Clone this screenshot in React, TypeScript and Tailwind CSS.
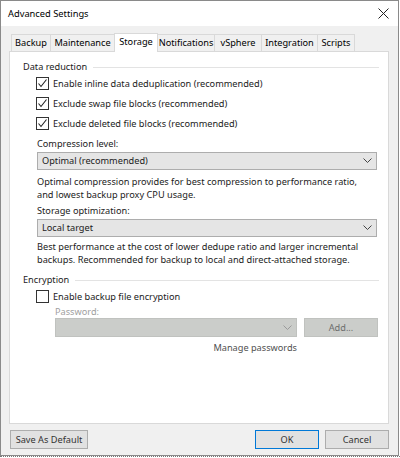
import React from "react";

const Check = ({ checked }: { checked: boolean }) => (
  <div className="w-[13px] h-[13px] border border-[#333333] bg-white flex items-center justify-center shrink-0">
    {checked && (
      <svg width="11" height="11" viewBox="0 0 11 11">
        <polyline points="1.5,5.5 4,8.5 9.5,1.5" fill="none" stroke="#222" strokeWidth="1.1" />
      </svg>
    )}
  </div>
);

const Chevron = ({ color = "#444" }: { color?: string }) => (
  <svg width="9" height="6" viewBox="0 0 9 6">
    <polyline points="0.5,0.5 4.5,4.5 8.5,0.5" fill="none" stroke={color} strokeWidth="1" />
  </svg>
);

const tabs = [
  { name: "Backup", w: "w-[40px]" },
  { name: "Maintenance", w: "w-[65px]" },
  { name: "Storage", w: "w-[44px]", sel: true },
  { name: "Notifications", w: "w-[58px]" },
  { name: "vSphere", w: "w-[48px]" },
  { name: "Integration", w: "w-[57px]" },
  { name: "Scripts", w: "w-[38px]" },
];

export default function App() {
  return (
    <div className="w-[400px] h-[458px] bg-white overflow-hidden font-['Noto_Sans',sans-serif] text-[9.2px] text-[#1b1b1b] whitespace-nowrap">
      <div className="w-[399px] h-[456px] border border-[#8a8a8a] bg-[#f0f0f0] flex flex-col">
        {/* title bar */}
        <div className="h-[25px] bg-white flex items-center justify-between pl-[7px] pr-[8px] shrink-0">
          <span className="text-[9.3px] text-black leading-none mt-[1px]">Advanced Settings</span>
          <svg width="11" height="11" viewBox="0 0 11 11" className="mr-[1px]">
            <line x1="0.5" y1="0.5" x2="10.5" y2="10.5" stroke="#222" strokeWidth="1" />
            <line x1="10.5" y1="0.5" x2="0.5" y2="10.5" stroke="#222" strokeWidth="1" />
          </svg>
        </div>
        {/* body */}
        <div className="flex-1 pl-[8px] pr-[9px] pt-[7px] flex flex-col">
          {/* tabs */}
          <div className="flex items-end h-[18px] pl-[2px] relative z-10">
            {tabs.map((t) =>
              t.sel ? (
                <div
                  key={t.name}
                  className={`${t.w} h-[19px] -ml-px bg-white border border-[#d9d9d9] border-b-0 flex items-center justify-center text-black -mb-[1px] pb-[2px]`}
                >
                  {t.name}
                </div>
              ) : (
                <div
                  key={t.name}
                  className={`${t.w} h-[17px] bg-[#f0f0f0] border border-[#d9d9d9] border-b-0 -ml-px first:ml-0 flex items-center justify-center text-black`}
                >
                  {t.name}
                </div>
              )
            )}
          </div>
          {/* panel */}
          <div className="h-[373px] bg-white border border-[#d9d9d9] pl-[13px] pr-[9px] pt-[8px] flex flex-col">
            {/* data reduction group */}
            <div className="flex items-center h-[14px]">
              <span className="leading-none mr-[6px]">Data reduction</span>
              <div className="flex-1 h-px bg-[#e3e3e3]" />
            </div>
            <div className="pl-[13px] flex flex-col">
              <div className="flex flex-col gap-[7px] mt-[3px]">
                {[
                  "Enable inline data deduplication (recommended)",
                  "Exclude swap file blocks (recommended)",
                  "Exclude deleted file blocks (recommended)",
                ].map((s) => (
                  <div key={s} className="flex items-center h-[13px] gap-[4px]">
                    <Check checked />
                    <span className="leading-none">{s}</span>
                  </div>
                ))}
              </div>
              <div className="pl-px mt-[7px]">
                <div className="h-[14px] flex items-center leading-none">Compression level:</div>
                <div className="mt-[1px] w-[340px] h-[18px] bg-[#e5e5e5] border border-[#adadad] flex items-center justify-between pl-[4px] pr-[4px]">
                  <span className="leading-none">Optimal (recommended)</span>
                  <Chevron />
                </div>
                <div className="mt-[5px] leading-[13px]">
                  Optimal compression provides for best compression to performance ratio,
                  <br />
                  and lowest backup proxy CPU usage.
                </div>
                <div className="mt-[3px] h-[14px] flex items-center leading-none">Storage optimization:</div>
                <div className="mt-[1px] w-[340px] h-[18px] bg-[#e5e5e5] border border-[#adadad] flex items-center justify-between pl-[4px] pr-[4px]">
                  <span className="leading-none">Local target</span>
                  <Chevron />
                </div>
                <div className="mt-[4px] leading-[12.5px]">
                  Best performance at the cost of lower dedupe ratio and larger incremental
                  <br />
                  backups. Recommended for backup to local and direct-attached storage.
                </div>
              </div>
            </div>
            {/* encryption group */}
            <div className="flex items-center h-[14px] mt-[7px]">
              <span className="leading-none mr-[6px]">Encryption</span>
              <div className="flex-1 h-px bg-[#e3e3e3]" />
            </div>
            <div className="pl-[13px] flex flex-col">
              <div className="flex items-center h-[13px] gap-[4px] mt-[3px]">
                <Check checked={false} />
                <span className="leading-none">Enable backup file encryption</span>
              </div>
              <div className="pl-[19px]">
                <div className="mt-[2px] h-[13px] flex items-center leading-none text-[#a0a0a0]">Password:</div>
                <div className="flex gap-[7px] mt-0">
                  <div className="w-[242px] h-[19px] bg-[#cbcdca] border border-[#c0c2bf] flex items-center justify-end pr-[4px]">
                    <Chevron color="#9a9a9a" />
                  </div>
                  <div className="w-[74px] h-[19px] bg-[#cbcdca] border border-[#c0c2bf] flex items-center justify-center text-[#6d6d6d]">
                    Add...
                  </div>
                </div>
                <div className="w-[242px] flex justify-end mt-[6px] text-[#505050] leading-none">Manage passwords</div>
              </div>
            </div>
          </div>
          {/* buttons */}
          <div className="flex items-center mt-[6px] pl-[1px]">
            <div className="w-[78px] h-[19px] bg-[#e1e1e1] border border-[#adadad] flex items-center justify-center text-[#333]">
              Save As Default
            </div>
            <div className="flex-1" />
            <div className="w-[64px] h-[19px] bg-[#e1e1e1] border border-[#0078d7] flex items-center justify-center text-[#333]">
              OK
            </div>
            <div className="w-[64px] h-[19px] bg-[#e1e1e1] border border-[#adadad] flex items-center justify-center ml-[6px] text-[#333]">
              Cancel
            </div>
          </div>
        </div>
      </div>
      <div className="h-[2px] border-t border-dotted border-[#777]" />
    </div>
  );
}
